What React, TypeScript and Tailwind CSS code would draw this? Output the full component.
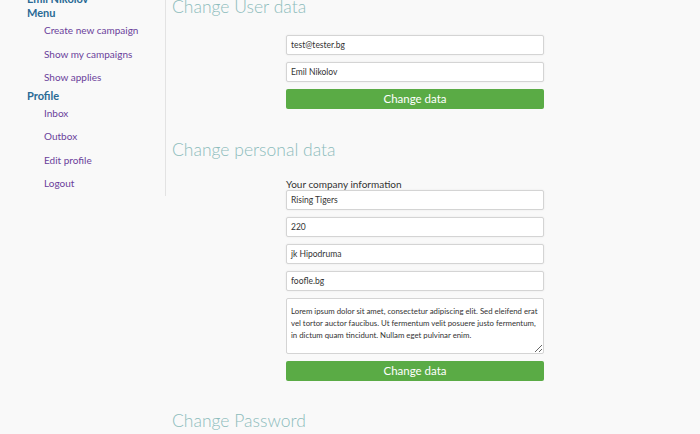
import React from "react";

const links1 = ["Create new campaign", "Show my campaigns", "Show applies"];
const links2 = ["Inbox", "Outbox", "Edit profile", "Logout"];

function Field({ value }: { value: string }) {
  return (
    <div className="h-[20px] w-[258px] rounded-[2px] border border-[#d4d4d4] bg-white pl-[4px] text-[8.5px] leading-[18px] text-[#333] shadow-[0_0_2px_rgba(0,0,0,0.08)]">
      {value}
    </div>
  );
}

function Btn() {
  return (
    <div className="flex h-[20px] w-[258px] items-center justify-center rounded-[2px] bg-[#5aab45] text-[11.5px] text-white">
      Change data
    </div>
  );
}

export default function App() {
  return (
    <div
      className="flex h-[434px] w-[700px] overflow-hidden bg-[#f9f9f9]"
      style={{ fontFamily: 'Lato, "Open Sans", sans-serif' }}
    >
      <div className="-mt-[7px] flex w-[166px] shrink-0 flex-col self-start border-r border-[#e3e3e3] pl-[27px]">
        <div className="h-[14px] text-[11px] font-bold leading-[12px] text-[#2a6a95]">Emil Nikolov</div>
        <div className="h-[12px] text-[11px] font-bold leading-[12px] text-[#2a6a95]">Menu</div>
        {links1.map((l) => (
          <div key={l} className="flex h-[23.5px] items-center pl-[17px] text-[10px] text-[#6b3f9b]">
            {l}
          </div>
        ))}
        <div className="h-[12px] text-[11px] font-bold leading-[12px] text-[#2a6a95]">Profile</div>
        {links2.map((l) => (
          <div key={l} className="flex h-[23.5px] items-center pl-[17px] text-[10px] text-[#6b3f9b]">
            {l}
          </div>
        ))}
      </div>
      <div className="flex flex-col pl-[6px]">
        <div className="-mt-[7px] h-[28px] text-[17.5px] font-light leading-[28px] text-[#8dbcbc]">Change User data</div>
        <div className="mt-[14px] flex flex-col gap-[7px] pl-[114px]">
          <Field value="test@tester.bg" />
          <Field value="Emil Nikolov" />
          <Btn />
        </div>
        <div className="mt-[27px] h-[28px] text-[17.5px] font-light leading-[28px] text-[#8dbcbc]">Change personal data</div>
        <div className="mt-[14px] flex flex-col pl-[114px]">
          <div className="h-[12px] text-[10px] leading-[12px] text-[#333]">Your company information</div>
          <div className="flex flex-col gap-[7px]">
            <Field value="Rising Tigers" />
            <Field value="220" />
            <Field value="jk Hipodruma" />
            <Field value="foofle.bg" />
            <textarea
              readOnly
              wrap="off"
              className="h-[56px] w-[258px] resize-y overflow-hidden rounded-[2px] border border-[#d4d4d4] bg-white px-[4px] pt-[6px] text-[7.8px] leading-[12px] text-[#333] outline-none"
              value={
                "Lorem ipsum dolor sit amet, consectetur adipiscing elit. Sed eleifend erat\nvel tortor auctor faucibus. Ut fermentum velit posuere justo fermentum,\nin dictum quam tincidunt. Nullam eget pulvinar enim."
              }
            />
            <Btn />
          </div>
        </div>
        <div className="mt-[26px] h-[28px] text-[17.5px] font-light leading-[28px] text-[#8dbcbc]">Change Password</div>
      </div>
    </div>
  );
}
